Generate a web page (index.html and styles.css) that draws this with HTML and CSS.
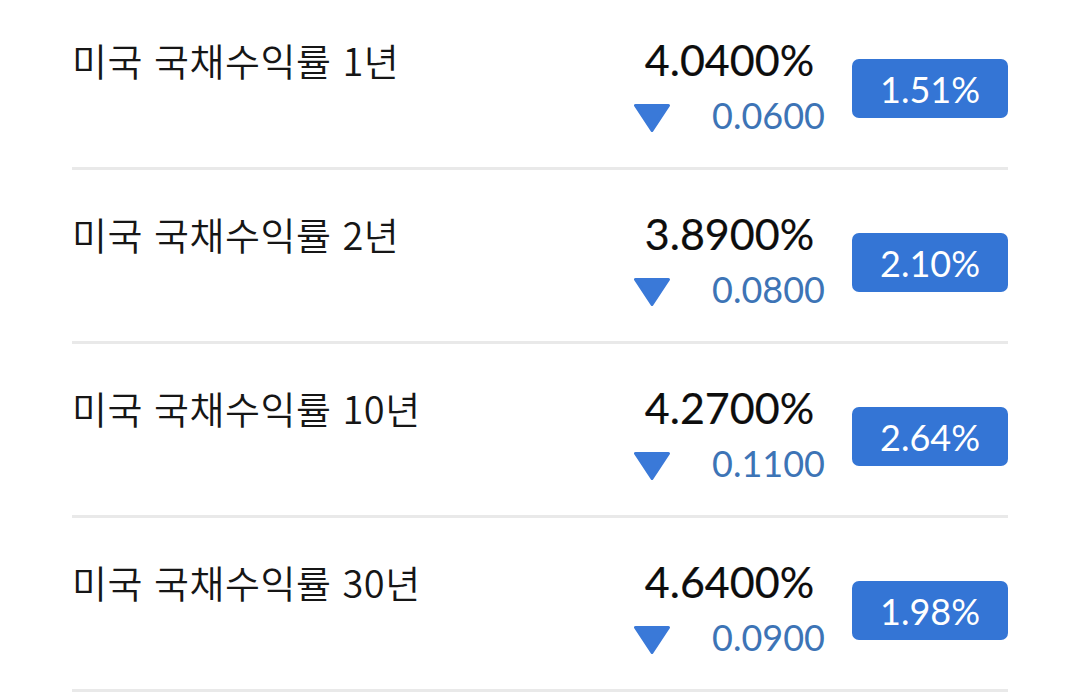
FILE: index.html
```html
<!DOCTYPE html>
<html lang="ko">
<head>
<meta charset="utf-8">
<title>미국 국채수익률</title>
<link rel="stylesheet" href="styles.css">
</head>
<body>
<ul class="list">
  <li class="row">
    <div class="title">미국 국채수익률 1년</div>
    <div class="quote">
      <div class="value">4.0400%</div>
      <div class="change">
        <svg class="tri" width="36" height="28" viewBox="0 0 36 28"><polygon points="1.5,1.5 34.5,1.5 18,26.5"/></svg>
        <span class="delta">0.0600</span>
      </div>
    </div>
    <div class="badge">1.51%</div>
  </li>
  <li class="row">
    <div class="title">미국 국채수익률 2년</div>
    <div class="quote">
      <div class="value">3.8900%</div>
      <div class="change">
        <svg class="tri" width="36" height="28" viewBox="0 0 36 28"><polygon points="1.5,1.5 34.5,1.5 18,26.5"/></svg>
        <span class="delta">0.0800</span>
      </div>
    </div>
    <div class="badge">2.10%</div>
  </li>
  <li class="row">
    <div class="title">미국 국채수익률 10년</div>
    <div class="quote">
      <div class="value">4.2700%</div>
      <div class="change">
        <svg class="tri" width="36" height="28" viewBox="0 0 36 28"><polygon points="1.5,1.5 34.5,1.5 18,26.5"/></svg>
        <span class="delta">0.1100</span>
      </div>
    </div>
    <div class="badge">2.64%</div>
  </li>
  <li class="row">
    <div class="title">미국 국채수익률 30년</div>
    <div class="quote">
      <div class="value">4.6400%</div>
      <div class="change">
        <svg class="tri" width="36" height="28" viewBox="0 0 36 28"><polygon points="1.5,1.5 34.5,1.5 18,26.5"/></svg>
        <span class="delta">0.0900</span>
      </div>
    </div>
    <div class="badge">1.98%</div>
  </li>
</ul>
</body>
</html>
```

FILE: styles.css
```css
html, body {
  margin: 0;
  padding: 0;
  background: #ffffff;
}

body {
  font-family: "Lato", "Noto Sans CJK KR", sans-serif;
  color: #111111;
  overflow: hidden;
}

.list {
  list-style: none;
  margin: -4px 0 0 72px;
  padding: 0;
  width: 936px;
}

.row {
  display: flex;
  align-items: flex-start;
  padding-top: 38px;
  box-sizing: content-box;
  height: 133px;
  border-bottom: 3px solid #e9e9e9;
}

.title {
  flex: 1;
  font-family: "Noto Sans CJK KR", sans-serif;
  font-size: 38px;
  font-weight: 350;
  letter-spacing: 0.5px;
  line-height: 52px;
  color: #161616;
  white-space: nowrap;
}

.quote {
  width: 191px;
  display: flex;
  flex-direction: column;
}

.value {
  font-family: "Lato", sans-serif;
  font-size: 43px;
  line-height: 52px;
  text-align: center;
  color: #0d0d0d;
  -webkit-text-stroke: 0.2px #0d0d0d;
}

.change {
  display: flex;
  align-items: center;
  gap: 42px;
  margin-top: 8px;
  height: 43px;
}

.tri {
  display: block;
  flex: none;
  margin-top: 5px;
}

.tri polygon {
  fill: #3a79d8;
  stroke: #3a79d8;
  stroke-width: 3;
  stroke-linejoin: round;
}

.delta {
  font-family: "Lato", sans-serif;
  font-size: 36px;
  line-height: 43px;
  color: #3d74b6;
}

.badge {
  flex: none;
  width: 156px;
  height: 59px;
  margin-left: 27px;
  margin-top: 25px;
  border-radius: 7px;
  background: #3475d5;
  color: #ffffff;
  font-family: "Lato", sans-serif;
  font-size: 36px;
  display: flex;
  align-items: center;
  justify-content: center;
}
```
